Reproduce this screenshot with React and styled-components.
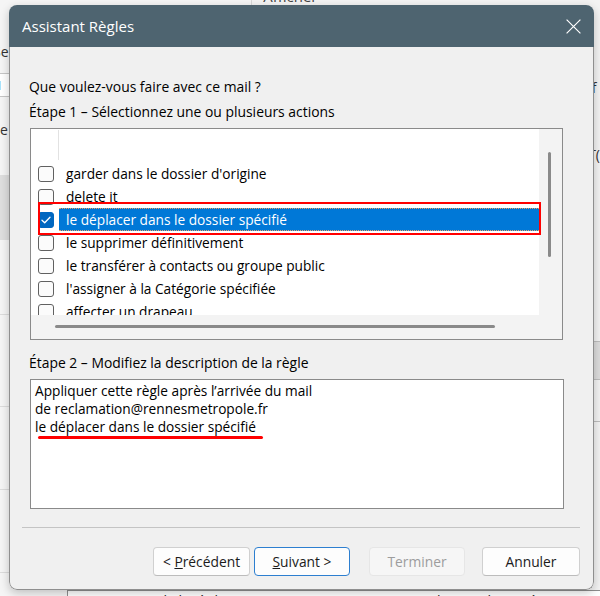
import React from 'react';
import styled, { createGlobalStyle } from 'styled-components';

const GlobalStyle = createGlobalStyle`
  html, body { margin: 0; padding: 0; }
  body {
    width: 600px; height: 596px; overflow: hidden;
    background: #f3f3f3;
    font-family: "Open Sans", "Noto Sans", sans-serif;
    color: #000;
  }
  * { box-sizing: border-box; }
`;

const Screen = styled.div`
  position: relative;
  width: 600px;
  height: 596px;
  overflow: hidden;
`;

/* ---------- background Outlook window ---------- */
const BgWindow = styled.div`
  width: 600px;
  height: 596px;
  display: flex;
  flex-direction: column;
  background: #f5f5f5;
`;
const BgBody = styled.div`
  flex: 1;
  display: flex;
  min-height: 0;
`;
const BgLeft = styled.div`
  width: 258px;
  border-right: 1px solid #d8d8d8;
  display: flex;
  flex-direction: column;
  font-size: 14px;
  color: #333;
`;
const BgText = styled.div`
  margin: ${p => p.$m || '0'};
  color: ${p => p.$color || '#333'};
  font-size: 14px;
  line-height: 18px;
  white-space: nowrap;
`;
const BgInput = styled.div`
  margin: 12px 0 0 -40px;
  width: 80px;
  height: 24px;
  border: 1px solid #c6c6c6;
  background: #fff;
  font-size: 13px;
  line-height: 22px;
  padding-left: 30px;
  color: #3a6ea5;
`;
const BgBlock = styled.div`
  margin-top: 36px;
  height: 65px;
  background: #dedede;
`;
const BgRow = styled.div`
  height: ${p => p.$h}px;
  border-bottom: 1px solid #dcdcdc;
  flex-shrink: 0;
`;
const BgRight = styled.div`
  flex: 1;
  display: flex;
  flex-direction: column;
  background: #f3f3f3;
`;
const BgHeading = styled.div`
  margin: -13px 0 0 11px;
  font-size: 15px;
  line-height: 18px;
  color: #444;
`;
const BgSide = styled.div`
  margin-left: 336px;
  display: flex;
  flex-direction: column;
`;
const BgSideLine = styled.div`
  height: ${p => p.$h}px;
  border-bottom: 1px solid #bdbdbd;
  background: ${p => p.$bg || 'transparent'};
`;
const BgFooter = styled.div`
  height: 6px;
  margin-left: 67px;
  border-top: 1px solid #8f8f8f;
  border-left: 1px solid #8f8f8f;
  background: #fff;
  display: flex;
  overflow: hidden;
`;
const BgFootText = styled.div`
  margin: 1px 0 0 ${p => p.$ml}px;
  font-size: 14px;
  line-height: 18px;
  color: #222;
  white-space: nowrap;
`;

/* ---------- dialog ---------- */
const Dialog = styled.div`
  position: absolute;
  left: 9px;
  top: 5px;
  width: 585px;
  height: 585px;
  border-radius: 8px;
  overflow: hidden;
  display: flex;
  flex-direction: column;
  box-shadow: 0 3px 10px rgba(0, 0, 0, 0.22);
`;
const TitleBar = styled.div`
  height: 42px;
  flex-shrink: 0;
  background: #4e6470;
  color: #fff;
  display: flex;
  align-items: center;
  justify-content: space-between;
  padding: 0 12px 0 13px;
`;
const Title = styled.div`
  font-size: 15px;
  line-height: 20px;
`;
const CloseIcon = styled.svg`
  width: 17px;
  height: 17px;
  display: block;
`;
const Body = styled.div`
  flex: 1;
  background: #f0f0f0;
  border: 1px solid #8f8f8f;
  border-top: none;
  border-radius: 0 0 8px 8px;
  padding: 0 29px 0 20px;
  display: flex;
  flex-direction: column;
`;
const Label = styled.div`
  margin: ${p => p.$mt}px 0 0 -1px;
  font-size: 13.9px;
  line-height: 20px;
  white-space: nowrap;
`;
const ListBox = styled.div`
  position: relative;
  margin: 6px 1px 0 0;
  height: 212px;
  border: 1px solid #8a8a8a;
  background: #f3f3f3;
  display: grid;
  grid-template-columns: 1fr 23px;
  grid-template-rows: 186px 1fr;
`;
const ListContent = styled.div`
  background: #fff;
  overflow: hidden;
  display: flex;
  flex-direction: column;
`;
const TopSpacer = styled.div`
  height: 33px;
  flex-shrink: 0;
  padding: 1px 0 0 27px;
`;
const FaintLine = styled.div`
  width: 1px;
  height: 30px;
  background: #e2e2e2;
`;
const Row = styled.div`
  height: 23px;
  flex-shrink: 0;
  display: flex;
  align-items: center;
  padding-left: 7px;
`;
const Check = styled.div`
  width: 16px;
  height: 16px;
  flex-shrink: 0;
  border-radius: 3px;
  border: 1px solid ${p => (p.$on ? '#0067c0' : '#616161')};
  background: ${p => (p.$on ? '#0067c0' : '#fbfbfb')};
  display: flex;
  align-items: center;
  justify-content: center;
`;
const ItemText = styled.div`
  margin-left: 5px;
  flex: 1;
  height: 23px;
  display: flex;
  align-items: center;
  padding-left: 7px;
  font-size: 13.7px;
  white-space: nowrap;
  color: ${p => (p.$sel ? '#fff' : '#000')};
  background: ${p => (p.$sel ? '#0078d7' : 'transparent')};
  border-top: 1px dotted ${p => (p.$sel ? '#f0a060' : 'transparent')};
  border-bottom: 1px dotted ${p => (p.$sel ? '#f0a060' : 'transparent')};
`;
const VScroll = styled.div`
  padding: 23px 0 0 9px;
`;
const VThumb = styled.div`
  width: 3px;
  height: 105px;
  border-radius: 2px;
  background: #8a8a8a;
`;
const HScroll = styled.div`
  display: flex;
  align-items: center;
  padding: 0 0 1px 24px;
`;
const HThumb = styled.div`
  width: 440px;
  height: 3px;
  border-radius: 2px;
  background: #8a8a8a;
`;
const RedBox = styled.div`
  position: absolute;
  left: 7px;
  top: 73px;
  width: 503px;
  height: 33px;
  border: 2px solid #ff0000;
  pointer-events: none;
`;
const DescBox = styled.div`
  position: relative;
  margin-top: 6px;
  height: 130px;
  border: 1px solid #8a8a8a;
  background: #fff;
  padding: 2px 4px;
  font-size: 13.7px;
  line-height: 18px;
`;
const DescLine = styled.div`
  white-space: nowrap;
`;
const RedUnderline = styled.div`
  position: absolute;
  left: 7px;
  top: 56px;
  width: 225px;
  height: 3px;
  border-radius: 2px;
  background: #ff0000;
`;
const Separator = styled.div`
  margin: 18px -16px 0 -8px;
  height: 1px;
  background: #c4c4c4;
`;
const Buttons = styled.div`
  margin: 19px -16px 0 0;
  display: flex;
  justify-content: flex-end;
`;
const Button = styled.div`
  width: ${p => p.$w || 97}px;
  height: 29px;
  margin-left: ${p => p.$ml || 0}px;
  border-radius: 4px;
  display: flex;
  align-items: center;
  justify-content: center;
  font-size: 13.8px;
  background: ${p => (p.$disabled ? '#f6f6f6' : '#fdfdfd')};
  color: ${p => (p.$disabled ? '#9d9d9d' : '#1b1b1b')};
  border: 1px solid ${p => (p.$primary ? '#2d7fd0' : p.$disabled ? '#e6e6e6' : '#d0d0d0')};
  border-bottom-color: ${p => (p.$primary ? '#2d7fd0' : p.$disabled ? '#e6e6e6' : '#bcbcbc')};
`;

const CheckMark = () => (
  <svg width="10" height="8" viewBox="0 0 10 8">
    <path d="M1 4.2 L3.7 6.8 L9 1.2" fill="none" stroke="#fff" strokeWidth="1.3" strokeLinecap="round" strokeLinejoin="round" />
  </svg>
);

const items = [
  { t: "garder dans le dossier d'origine" },
  { t: 'delete it' },
  { t: 'le déplacer dans le dossier spécifié', on: true },
  { t: 'le supprimer définitivement' },
  { t: 'le transférer à contacts ou groupe public' },
  { t: "l'assigner à la Catégorie spécifiée" },
  { t: 'affecter un drapeau' },
];

export default function App() {
  return (
    <Screen>
      <GlobalStyle />
      <BgWindow>
        <BgBody>
          <BgLeft>
            <BgText $m="43px 0 0 -7px">Se</BgText>
            <BgInput>: I</BgInput>
            <BgText $m="24px 0 0 0">e</BgText>
            <BgBlock />
            <BgRow $h={75} />
            <BgRow $h={92} />
            <BgRow $h={83} />
            <BgRow $h={83} />
          </BgLeft>
          <BgRight>
            <BgHeading>Afficher</BgHeading>
            <BgSide>
              <BgText $m="74px 0 0 0">if</BgText>
              <BgText $m="49px 0 0 0">T(</BgText>
              <BgText $m="22px 0 0 0" $color="#2b579a">I</BgText>
              <BgSideLine $h={138} />
              <BgSideLine $h={38} $bg="#dcdcdc" />
              <BgSideLine $h={42} />
            </BgSide>
          </BgRight>
        </BgBody>
        <BgFooter>
          <BgFootText $ml={12}>Description de la règle</BgFootText>
          <BgFootText $ml={150}>▭ Tester les conditions à</BgFootText>
        </BgFooter>
      </BgWindow>

      <Dialog>
        <TitleBar>
          <Title>Assistant Règles</Title>
          <CloseIcon viewBox="0 0 16 16">
            <path d="M1.5 1.5 L14.5 14.5 M14.5 1.5 L1.5 14.5" stroke="#fff" strokeWidth="1.1" fill="none" />
          </CloseIcon>
        </TitleBar>
        <Body>
          <Label $mt={30}>Que voulez-vous faire avec ce mail ?</Label>
          <Label $mt={5}>Étape 1 – Sélectionnez une ou plusieurs actions</Label>
          <ListBox>
            <ListContent>
              <TopSpacer>
                <FaintLine />
              </TopSpacer>
              {items.map(it => (
                <Row key={it.t}>
                  <Check $on={it.on}>{it.on && <CheckMark />}</Check>
                  <ItemText $sel={it.on}>{it.t}</ItemText>
                </Row>
              ))}
            </ListContent>
            <VScroll>
              <VThumb />
            </VScroll>
            <HScroll>
              <HThumb />
            </HScroll>
            <div />
            <RedBox />
          </ListBox>
          <Label $mt={13}>Étape 2 – Modifiez la description de la règle</Label>
          <DescBox>
            <DescLine>Appliquer cette règle après l’arrivée du mail</DescLine>
            <DescLine>de reclamation@rennesmetropole.fr</DescLine>
            <DescLine>le déplacer dans le dossier spécifié</DescLine>
            <RedUnderline />
          </DescBox>
          <Separator />
          <Buttons>
            <Button><span>&lt; <u>P</u>récédent</span></Button>
            <Button $ml={4} $w={96} $primary><span><u>S</u>uivant &gt;</span></Button>
            <Button $ml={19} $w={96} $disabled>Terminer</Button>
            <Button $ml={17} $w={98}>Annuler</Button>
          </Buttons>
        </Body>
      </Dialog>
    </Screen>
  );
}
